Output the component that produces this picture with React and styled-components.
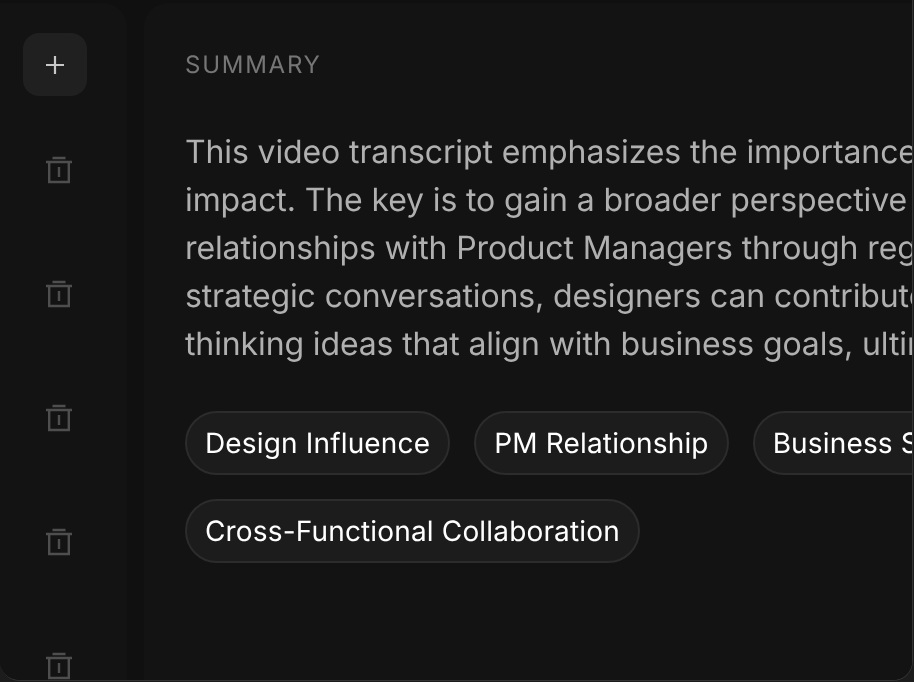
import styled, { createGlobalStyle } from "styled-components"

const GlobalStyle = createGlobalStyle`
  html, body {
    margin: 0;
    height: 100%;
    background: #1c1c1c;
  }
`

const Page = styled.div`
  width: 914px;
  height: 682px;
  overflow: hidden;
  will-change: transform;
  font-family: Inter, "Liberation Sans", sans-serif;
  text-rendering: geometricPrecision;
  -webkit-font-smoothing: antialiased;
`

const Frame = styled.div`
  box-sizing: border-box;
  width: 913px;
  height: 681px;
  padding-top: 3px;
  display: flex;
  gap: 17px;
  overflow: hidden;
  background: #101010;
  border: 1px solid #333333;
  border-top: 0;
  border-left: 0;
  border-radius: 0 0 20px 20px;
`

const Sidebar = styled.aside`
  flex: none;
  box-sizing: border-box;
  width: 127px;
  padding: 30px 0 0 23px;
  display: flex;
  flex-direction: column;
  background: #131313;
  border-radius: 0 24px 0 0;
`

const AddButton = styled.button`
  width: 64px;
  height: 64px;
  padding: 0;
  display: flex;
  align-items: center;
  justify-content: center;
  background: #202020;
  border: 0;
  border-radius: 16px;
`

const TrashList = styled.div`
  margin-top: 60px;
  padding-left: 23px;
  display: flex;
  flex-direction: column;
  gap: 96px;
`

const Main = styled.main`
  flex: 1;
  min-width: 0;
  box-sizing: border-box;
  padding: 47px 0 0 41px;
  overflow: hidden;
  background: #131313;
  border-radius: 24px 0 0 0;
`

const Heading = styled.h2`
  margin: 0;
  font-size: 24px;
  line-height: 30px;
  font-weight: 400;
  letter-spacing: 1.75px;
  color: #767676;
`

const Summary = styled.p`
  margin: 48px 0 0;
  white-space: nowrap;
  font-size: 32px;
  line-height: 48px;
  letter-spacing: -0.12px;
  color: #b0b0b0;

  span {
    display: block;
  }
`

const Tags = styled.div`
  width: 1000px;
  margin-top: 43px;
  display: flex;
  flex-wrap: wrap;
  gap: 24px;
`

const Tag = styled.div`
  box-sizing: border-box;
  height: 64px;
  padding: 0 18px;
  display: flex;
  align-items: center;
  font-size: 28px;
  letter-spacing: 0.16px;
  color: #ffffff;
  background: #1c1c1c;
  border: 2px solid #2c2c2c;
  border-radius: 32px;
`

const PlusIcon = () => (
  <svg width="18" height="18" viewBox="0 0 18 18" fill="none" stroke="#c8c8c8" strokeWidth="2.2">
    <path d="M9 0v18M0 9h18" />
  </svg>
)

const TrashIcon = () => (
  <svg width="26" height="28" viewBox="0 0 26 28" fill="none" stroke="#4e4e4e" strokeWidth="2.4">
    <path d="M6.5 2h13M0 6h26M3.2 6v20h19.6V6M13 11v10" />
  </svg>
)

const lines = [
  "This video transcript emphasizes the importance of",
  "impact. The key is to gain a broader perspective on",
  "relationships with Product Managers through regular",
  "strategic conversations, designers can contribute",
  "thinking ideas that align with business goals, ultimately",
]

const tags = [
  "Design Influence",
  "PM Relationship",
  "Business Strategy",
  "Cross-Functional Collaboration",
]

const App = () => {
  return (
    <Page>
      <GlobalStyle />
      <Frame>
        <Sidebar>
          <AddButton>
            <PlusIcon />
          </AddButton>
          <TrashList>
            {[0, 1, 2, 3, 4].map((i) => (
              <TrashIcon key={i} />
            ))}
          </TrashList>
        </Sidebar>
        <Main>
          <Heading>SUMMARY</Heading>
          <Summary>
            {lines.map((line) => (
              <span key={line}>{line}</span>
            ))}
          </Summary>
          <Tags>
            {tags.map((tag) => (
              <Tag key={tag}>{tag}</Tag>
            ))}
          </Tags>
        </Main>
      </Frame>
    </Page>
  )
}

export default App
